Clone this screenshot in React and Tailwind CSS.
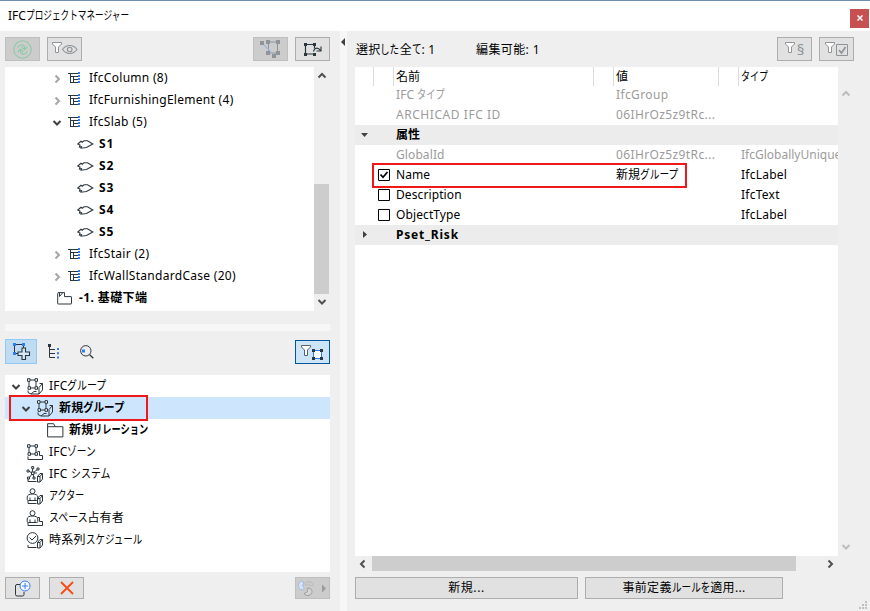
import clsx from 'clsx';

const KANA = /([ぁ-んァ-ヶー]+)/;

// UI label: kana are set narrower than kanji, like in the Windows UI fonts
function Label({ text, kana = 0.77, className }) {
  return (
    <span className={clsx('whitespace-pre', className)}>
      {text.split(KANA).map((part, i) =>
        i % 2 === 1 ? (
          <span
            key={i}
            className="inline-block origin-left tracking-normal"
            style={{ transform: `scaleX(${kana})`, marginRight: `${-(1 - kana) * part.length}em` }}
          >
            {part}
          </span>
        ) : (
          part
        )
      )}
    </span>
  );
}

function Svg({ w, h, className, children }) {
  return (
    <svg width={w} height={h} viewBox={`0 0 ${w} ${h}`} fill="none" stroke="#2b373d" className={clsx('block shrink-0', className)}>
      {children}
    </svg>
  );
}

function Chevron({ dir, color = '#505050', className }) {
  const paths = {
    up: 'M1.5 6.5 5 3l3.5 3.5',
    down: 'M1.5 3 5 6.5 8.5 3',
    left: 'M6.5 1.5 3 5l3.5 3.5',
    right: 'M3.5 1.5 7 5 3.5 8.5',
  };
  return (
    <Svg w={10} h={10} className={className}>
      <path d={paths[dir]} stroke={color} strokeWidth="2" />
    </Svg>
  );
}

function Funnel({ color = '#8f9498', fill = '#fff' }) {
  return <path d="M.5 .5h9v1.500l-3 3v5.500h-3V5l-3-3z" stroke={color} fill={fill} />;
}

function RefreshIcon() {
  return (
    <Svg w={19} h={19}>
      <g stroke="#8ccba5" strokeWidth="1.1">
        <circle cx="9.5" cy="9.5" r="8.7" />
        <path d="M4.500 7.500C6 4.500 10 4 11.500 6.500V9.500M8.700 7l2.800 2.800L14.300 7" />
        <path d="M14.500 11.500C13 14.500 9 15 7.500 12.500V9.500M4.700 12l2.800-2.800 2.800 2.800" />
      </g>
    </Svg>
  );
}

function FunnelEyeIcon() {
  return (
    <Svg w={26} h={14}>
      <Funnel />
      <g stroke="#8f9498" strokeWidth="1.1">
        <path d="M10.500 7.500c4-5.300 10.500-5.300 14.500 0-4 5.300-10.500 5.300-14.500 0z" />
        <circle cx="17.700" cy="7.500" r="2.300" />
      </g>
    </Svg>
  );
}

function UngroupIcon() {
  return (
    <Svg w={21} h={18}>
      <path d="M8.500 2h9v11h-9z" stroke="#8f9498" />
      <path d="M3 4l11 11" stroke="#9fb9df" strokeWidth="1.300" />
      <path d="M0 1h4v4H0zM6 0h4v4H6zM16 0h4v4h-4zM6 11h4v4H6zM16 11h4v4h-4zM12 14h4v4h-4z" fill="#8f9498" stroke="none" />
    </Svg>
  );
}

function RegroupIcon() {
  return (
    <Svg w={19} h={13}>
      <path d="M2.500 2v9h8M2.500 1.500h9v4" strokeWidth="1.200" />
      <path d="M10.500 8.500c1-4 4.500-4.500 7-1M18 3.500v4.500h-4.500" strokeWidth="1.100" />
      <path d="M1 0h3v3H1zM10 0h3v3h-3zM1 10h3v3H1zM10 10h3v3h-3z" fill="#2b373d" stroke="none" />
    </Svg>
  );
}

function ClassIcon() {
  return (
    <Svg w={14} h={12} className="ml-[5px]">
      <path d="M.5 1.500H11M3.500 1.500v9H11M3.500 4.500H11M6.500 4.500v6M6.500 7.500H11" shapeRendering="crispEdges" />
      <path d="M12 0v12" stroke="#2f7df6" strokeWidth="2" strokeDasharray="2 1" />
    </Svg>
  );
}

function SlabIcon() {
  return (
    <Svg w={17} h={9}>
      <path d="M.800 4 4 1.300l1.200.900L7 .800h3.500L15.800 4 9.500 7.500 4 8.200l.500-1.500-2 .300L3 5z" strokeWidth="1.100" />
    </Svg>
  );
}

function StoryIcon() {
  return (
    <Svg w={16} h={13}>
      <path d="M2 .600h5.500v4H14a.500.500 0 0 1 .500.500v6.400a.500.500 0 0 1-.500.500H1.200a.500.500 0 0 1-.500-.500V1.500A1 1 0 0 1 2 .600z" />
      <path d="M2.500 1v3.500L5.500 1" />
    </Svg>
  );
}

function FolderIcon() {
  return (
    <Svg w={17} h={15} className="mr-[-1px] ml-px">
      <path d="M.600 13.900V.700h6l1.800 3h7.500v10.200zM.600 3.700h8" />
    </Svg>
  );
}

function Nodes() {
  return (
    <>
      <path d="M3 3v6M4 2h5M10 3v6M4 10h5" />
      <path d="M1.500 .700H4v2.600H1.500zM9 .700h2.500v2.600H9zM2 8.700h2.500v2.600H2zM9 8.700h2.500v2.600H9z" fill="#fff" />
    </>
  );
}

function Block({ small }) {
  return small ? (
    <path d="M2 13v2.500h8.500M11.500 16H14l2.500-3V7.500H14L11.500 10.500zM11.500 10.500H14l2.500-3M14 10.500V16" />
  ) : (
    <path d="M2 12.500V14.500l3 1.500h8l3.500-4V5.500h-3M16.500 5.500 13 9.500V16M5 16l3-2.500h2.500" />
  );
}

function Step() {
  return <path d="M2 12.500v3h14.500v-4h-3V7.500H11.500" />;
}

const Person = () => (
  <>
    <circle cx="6.500" cy="3.200" r="2.500" />
    <path d="M1.200 9C1.500 7 3 6 6.500 6S11.500 7 11.800 9v2.500a1 1 0 0 1-1 1H2.200a1 1 0 0 1-1-1zM4 9.500v3M9 9.500v3" />
  </>
);

const groupIcons = {
  group: <><Nodes /><Block /></>,
  zone: <><Nodes /><Step /></>,
  system: (
    <>
      <path d="M6 7 2.500 5M6 7l1-5.500M7 7l5-4M7 7h4M6 8l-3 4M7 8l1 4" />
      <path d="M5.700.600h2v2h-2zM11 2h2v2h-2zM1 4h2v2H1zM5.500 6h2.500v2.500H5.500zM1.500 11h2v2h-2zM7 11h2v2H7z" fill="#fff" />
      <Block small />
    </>
  ),
  actor: <><Person /><Block small /></>,
  occupant: <><Person /><Step /></>,
  schedule: (
    <>
      <circle cx="6.500" cy="6" r="5.400" />
      <path d="M3.500 5.500 6 8l4-4" />
      <Block small />
    </>
  ),
};

function AddGroupIcon() {
  return (
    <Svg w={18} h={17} className="ml-0.5">
      <path d="M1.500 1.500h9v9h-9z" />
      <path d="M0 0h3v3H0zM9 0h3v3H9zM0 9h3v3H0z" fill="#2f7df6" stroke="none" />
      <path d="M9 5h3.500v4h4v3.500h-4v4H9v-4H5V9h4z" fill="#d5e8f7" strokeWidth="1.100" />
    </Svg>
  );
}

function TreeIcon() {
  return (
    <Svg w={12} h={15}>
      <path d="M1.500 2v11.500H7M1.500 5.500H7M1.500 9.500H7" />
      <path d="M0 0h3v3H0z" fill="#2b373d" stroke="none" />
      <path d="M10 4v11" stroke="#2f7df6" strokeWidth="2" strokeDasharray="2 2.300" />
    </Svg>
  );
}

function FindIcon() {
  return (
    <Svg w={14} h={14}>
      <circle cx="5.800" cy="5.800" r="5.200" />
      <path d="M9.700 9.700l3.600 3.600" strokeWidth="1.300" />
      <path d="M2 4.500h3v3H2z" fill="#2f7df6" stroke="none" />
    </Svg>
  );
}

function FilterGroupIcon() {
  return (
    <Svg w={23} h={15}>
      <Funnel color="#56636b" />
      <path d="M12.500 5.500h8v8h-8z" stroke="#2f7df6" fill="#fff" />
      <path d="M11 4h3v3h-3zM19 4h3v3h-3zM11 12h3v3h-3zM19 12h3v3h-3z" fill="#2b373d" stroke="none" />
    </Svg>
  );
}

function ToolButton({ disabled, active, short, children, className }) {
  return (
    <button
      className={clsx(
        'flex w-[35px] shrink-0 items-center justify-center border',
        short ? 'h-[22px]' : 'h-6',
        disabled && 'border-[#bfbfbf] bg-[#cccccc]',
        active && 'border-[#00559b] bg-[#cce4f7]',
        !disabled && !active && 'border-[#adadad] bg-[#e1e1e1]',
        className
      )}
    >
      {children}
    </button>
  );
}

const elements = [
  { name: 'IfcColumn (8)', kind: 'class' },
  { name: 'IfcFurnishingElement (4)', kind: 'class' },
  { name: 'IfcSlab (5)', kind: 'class', open: true },
  { name: 'S1', kind: 'slab' },
  { name: 'S2', kind: 'slab' },
  { name: 'S3', kind: 'slab' },
  { name: 'S4', kind: 'slab' },
  { name: 'S5', kind: 'slab' },
  { name: 'IfcStair (2)', kind: 'class' },
  { name: 'IfcWallStandardCase (20)', kind: 'class' },
  { name: '-1. 基礎下端', kind: 'story' },
];

function ElementRow({ item }) {
  if (item.kind === 'class') {
    return (
      <li className="flex h-[22px] items-center pl-[47px]">
        <Chevron dir={item.open ? 'down' : 'right'} color={item.open ? '#404040' : '#a6a6a6'} className="mt-0.5" />
        <ClassIcon />
        <Label text={item.name} className="ml-2 tracking-[0.29px]" />
      </li>
    );
  }
  return (
    <li className={clsx('flex h-[22px] items-center font-bold', item.kind === 'slab' ? 'pl-[72px]' : 'pl-[52px]')}>
      {item.kind === 'slab' ? <SlabIcon /> : <StoryIcon />}
      <Label text={item.name} className={item.kind === 'slab' ? 'ml-[5px] tracking-[0.8px]' : 'ml-1.5 tracking-[0.4px]'} />
    </li>
  );
}

const groups = [
  { name: 'IFCグループ', icon: 'group', open: true, kana: 0.83 },
  { name: '新規グループ', icon: 'group', open: true, level: 1, selected: true, kana: 0.88 },
  { name: '新規リレーション', icon: 'folder', level: 2 },
  { name: 'IFCゾーン', icon: 'zone', kana: 0.81 },
  { name: 'IFC システム', icon: 'system', kana: 0.83 },
  { name: 'アクター', icon: 'actor', kana: 0.75 },
  { name: 'スペース占有者', icon: 'occupant', kana: 0.83 },
  { name: '時系列スケジュール', icon: 'schedule', kana: 0.79 },
];

function GroupRow({ item }) {
  return (
    <li
      className={clsx(
        'flex h-[22px] items-center',
        item.level ? 'font-bold' : 'font-normal',
        item.level === 1 ? 'pl-4' : item.level === 2 ? 'pl-[26px]' : 'pl-1.5',
        item.selected && 'bg-[#cde6fe]'
      )}
    >
      <span className="w-[15px]">{item.open && <Chevron dir="down" color="#404040" className="mt-0.5" />}</span>
      {item.icon === 'folder' ? <FolderIcon /> : <Svg w={17} h={17}>{groupIcons[item.icon]}</Svg>}
      <Label text={item.name} kana={item.kana} className="ml-1.5 tracking-[0.2px]" />
    </li>
  );
}

const properties = [
  { name: 'IFC タイプ', value: 'IfcGroup', locked: true },
  { name: 'ARCHICAD IFC ID', value: '06IHrOz5z9tRc...', locked: true },
  { name: '属性', section: 'open' },
  { name: 'GlobalId', value: '06IHrOz5z9tRc...', type: 'IfcGloballyUniqueId', locked: true },
  { name: 'Name', value: '新規グループ', type: 'IfcLabel', check: true, checked: true },
  { name: 'Description', type: 'IfcText', check: true },
  { name: 'ObjectType', type: 'IfcLabel', check: true },
  { name: 'Pset_Risk', section: 'closed' },
];

function PropertyRow({ item }) {
  return (
    <div
      className={clsx(
        'grid h-5 grid-cols-[18px_23px_220px_125px_98px] items-center overflow-hidden',
        item.section && 'bg-[#ececec] font-bold',
        item.locked && 'text-[#9b9b9b]'
      )}
    >
      <span className="pl-1.5">
        {item.section && (
          <Svg w={8} h={8}>
            <path d={item.section === 'open' ? 'M0 2h7L3.500 6z' : 'M2 0v7l4-3.500z'} fill="#404040" stroke="none" />
          </Svg>
        )}
      </span>
      <span className="pl-[5px]">
        {item.check && (
          <Svg w={12} h={12}>
            <path d="M.500.500h11v11H.500z" stroke="#000" fill="#fff" />
            {item.checked && <path d="M2.500 5.500 5 8.300 9.500 3" stroke="#000" strokeWidth="1.700" />}
          </Svg>
        )}
      </span>
      <Label
        text={item.name}
        className={item.section === 'closed' ? 'tracking-[0.8px]' : item.name.startsWith('A') ? 'tracking-[0.55px]' : 'tracking-[0.1px]'}
      />
      <Label text={item.value ?? ''} kana={0.81} className={item.locked && 'tracking-[0.38px]'} />
      <Label text={item.type ?? ''} className={clsx('overflow-hidden', !item.locked && 'tracking-[0.25px]')} />
    </div>
  );
}

function ElementPanel() {
  return (
    <>
      <div className="flex h-6">
        <ToolButton disabled><RefreshIcon /></ToolButton>
        <ToolButton className="ml-[7px]"><FunnelEyeIcon /></ToolButton>
        <ToolButton disabled className="ml-auto"><UngroupIcon /></ToolButton>
        <ToolButton className="ml-[7px]"><RegroupIcon /></ToolButton>
      </div>
      <div className="mt-1.5 flex h-[244px]">
        <ul className="w-[309px] bg-white">
          {elements.map((item) => <ElementRow key={item.name} item={item} />)}
        </ul>
        <div className="flex w-[15px] flex-col items-center py-1">
          <Chevron dir="up" />
          <div className="mt-auto h-[110px] w-full shrink-0 bg-[#cdcdcd]" />
          <Chevron dir="down" className="mt-[3px]" />
        </div>
      </div>
    </>
  );
}

function GroupPanel() {
  return (
    <>
      <div className="mt-2 flex h-[25px] items-center">
        <button className="flex h-[25px] w-8 items-center justify-center border border-[#90c8f6] bg-[#c0dcf3]">
          <AddGroupIcon />
        </button>
        <span className="ml-[11px]"><TreeIcon /></span>
        <span className="ml-5"><FindIcon /></span>
        <ToolButton active className="mt-px ml-auto"><FilterGroupIcon /></ToolButton>
      </div>
      <div className="relative mt-[11px] h-[197px] bg-white">
        <ul>
          {groups.map((item) => <GroupRow key={item.name} item={item} />)}
        </ul>
        <div className="absolute top-5 left-1 h-[26px] w-[139px] border-2 border-[#f01818]" />
      </div>
      <div className="mt-[5px] flex">
        <ToolButton short>
          <Svg w={18} h={17}>
            <path d="M7 4.500H3A1.500 1.500 0 0 0 1.500 6v8.500A1.500 1.500 0 0 0 3 16h5.500a1.500 1.500 0 0 0 1.500-1.500V12" />
            <circle cx="11" cy="6" r="5" stroke="#2f7df6" fill="#fff" />
            <path d="M11 3v6M8 6h6" stroke="#2f7df6" />
          </Svg>
        </ToolButton>
        <ToolButton short className="ml-[9px]">
          <Svg w={14} h={14}>
            <path d="M1 1l12 12M13 1 1 13" stroke="#fa4a16" strokeWidth="1.800" />
          </Svg>
        </ToolButton>
        <ToolButton short disabled className="ml-auto">
          <Svg w={31} h={17}>
            <path d="M5 1C1 2 .500 6 2.500 8.500s5 1.500 4.500-.500-2-2-1-3.500S6.500.600 5 1z" stroke="#99b9e8" fill="#d7e3f2" />
            <path d="M8 4c1-3 7-3 8 0s-2 2-4 1-4 1-4-1z" stroke="#b8bcbc" />
            <path d="M11 8c3 0 5 3 3.500 5.500S8 16 7.500 14s2.500-1 3-2.500S9 8.500 11 8z" stroke="#999" fill="#d6d6d6" />
            <path d="M25 4.500v8l4-4z" fill="#9b9b9b" stroke="none" />
          </Svg>
        </ToolButton>
      </div>
    </>
  );
}

function PropertyPanel() {
  return (
    <section className="flex flex-1 flex-col pt-1.5 pl-2">
      <div className="flex h-6 items-center pr-4">
        <Label text="選択した全て: 1" kana={0.8} className="mt-0.5 ml-px w-[120px] tracking-[0.2px]" />
        <Label text="編集可能: 1" className="mt-0.5 tracking-[0.4px]" />
        <ToolButton className="ml-auto">
          <Svg w={10} h={14}><Funnel /></Svg>
          <span className="ml-0.5 text-[15px] leading-none text-[#8f9498]">§</span>
        </ToolButton>
        <ToolButton className="ml-[7px]">
          <Svg w={24} h={14}>
            <Funnel />
            <path d="M11.500 2.500h11v11h-11z" stroke="#8f9498" />
            <path d="M14 8l2.500 3L20.500 5" stroke="#8f9498" strokeWidth="1.700" />
          </Svg>
        </ToolButton>
      </div>
      <div className="mt-1.5 flex h-[489px]">
        <div className="relative w-[483px] bg-white">
          <div className="grid h-[18px] grid-cols-[19px_20px_200px_20px_105px_20px_99px] items-center">
            <span className="h-full border-r border-[#dcdcdc]" />
            <span className="h-full border-r border-[#dcdcdc]" />
            <span className="h-full border-r border-[#dcdcdc] pt-px pl-0.5"><Label text="名前" /></span>
            <span className="h-full border-r border-[#dcdcdc]" />
            <span className="h-full border-r border-[#dcdcdc] pt-px pl-0.5"><Label text="値" /></span>
            <span className="h-full border-r border-[#dcdcdc]" />
            <span className="h-full pt-px pl-0.5"><Label text="タイプ" kana={0.75} /></span>
          </div>
          {properties.map((item) => <PropertyRow key={item.name} item={item} />)}
          <div className="absolute top-24 left-[17px] h-[25px] w-[315px] border-2 border-[#f01818]" />
        </div>
        <div className="flex w-4 flex-col items-center justify-between pt-[22px] pb-1">
          <Chevron dir="up" color="#bdbdbd" />
          <Chevron dir="down" color="#bdbdbd" />
        </div>
      </div>
      <div className="flex h-[15px] w-[483px] items-center">
        <Chevron dir="left" className="ml-[3px]" />
        <div className="ml-1 h-full w-[424px] bg-[#cdcdcd]" />
        <Chevron dir="right" className="mr-[3px] ml-auto" />
      </div>
      <div className="mt-1.5 flex gap-[7px]">
        <button className="h-[22px] w-[223px] border border-[#adadad] bg-[#e1e1e1] leading-none"><Label text="新規..." className="tracking-[0.6px]" /></button>
        <button className="h-[22px] w-[198px] border border-[#adadad] bg-[#e1e1e1] leading-none"><Label text="事前定義ルールを適用..." kana={0.8} className="tracking-[0.35px]" /></button>
        <Svg w={8} h={8} className="mt-6 mr-[3px] ml-auto">
          <path d="M6 0h2v2H6zM3 3h2v2H3zM6 3h2v2H6zM0 6h2v2H0zM3 6h2v2H3zM6 6h2v2H6z" fill="#bfbfbf" stroke="none" />
        </Svg>
      </div>
    </section>
  );
}

export default function App() {
  return (
    <div className="flex h-[611px] w-[870px] flex-col overflow-hidden border-t border-[#6f8fae] bg-[#efefef] font-['Noto_Sans','Noto_Sans_CJK_JP',sans-serif] text-[12px] leading-[18px] text-black">
      <header className="flex h-[30px] shrink-0 items-center bg-white pl-2">
        <Label text="IFCプロジェクトマネージャー" kana={0.72} />
        <button className="mt-1 mr-px ml-auto flex h-[19px] w-[19px] items-center justify-center bg-[#c75050]">
          <Svg w={6} h={6}>
            <path d="M.500.500l5 5M5.500.500l-5 5" stroke="#fff" strokeWidth="1.500" />
          </Svg>
        </button>
      </header>
      <main className="flex flex-1">
        <section className="w-[340px] pt-1.5 pr-2.5 pl-[5px]">
          <ElementPanel />
          <div className="mt-[13px] h-[7px] bg-[#f7f7f7]" />
          <GroupPanel />
        </section>
        <div className="w-[7px] bg-[#f7f7f7] pt-[7px]">
          <Svg w={5} h={8}>
            <path d="M5 0v8L1 4z" fill="#404040" stroke="none" />
          </Svg>
        </div>
        <PropertyPanel />
      </main>
    </div>
  );
}
